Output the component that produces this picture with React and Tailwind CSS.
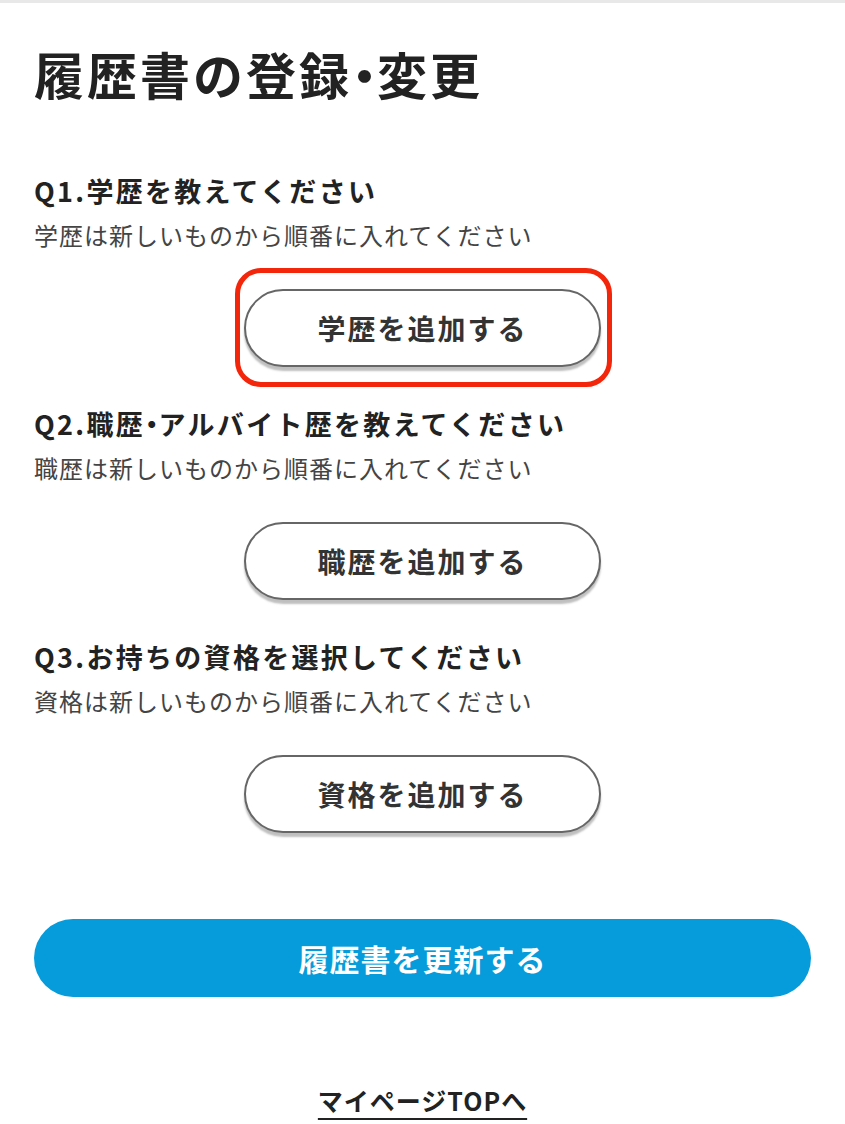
import React from "react";

const font = { fontFamily: '"Noto Sans CJK JP", "Noto Sans", sans-serif' };

// proportional (narrow) middle dot like the reference
const Dot = () => <span className="[font-feature-settings:'palt'] tracking-normal">・</span>;

function Section({ title, note, label, marked }) {
  return (
    <div className="flex flex-col">
      <h2 className="text-[27px] font-bold leading-[36px] text-[#222] tracking-[2.3px]">{title}</h2>
      <p className="mt-[10px] text-[24px] leading-[32px] text-[#444] tracking-[1px]">{note}</p>
      <div className="mt-[38px] flex justify-center">
        <div className="relative">
          <button className="w-[357px] h-[78px] rounded-full border-2 border-[#666] bg-white text-[28px] font-bold text-[#333] tracking-[2px] shadow-[0_4px_2px_rgba(0,0,0,0.25)]">
            {label}
          </button>
          {marked && (
            <div className="absolute -left-[9px] -right-[11px] -top-[21px] -bottom-[20px] rounded-[26px] border-[5px] border-[#f3260b] pointer-events-none" />
          )}
        </div>
      </div>
    </div>
  );
}

export default function App() {
  return (
    <div className="min-h-screen bg-white" style={font}>
      <div className="h-[3px] bg-[#e8e8e8]" />
      <div className="px-[34px]">
        <h1 className="mt-[38px] text-[50px] font-bold leading-[64px] text-[#222] tracking-[3px]">
          履歴書の登録<Dot />変更
        </h1>

        <div className="mt-[68px] flex flex-col gap-[39px]">
          <Section
            title={<>Q1.学歴を教えてください</>}
            note="学歴は新しいものから順番に入れてください"
            label="学歴を追加する"
            marked
          />
          <Section
            title={<>Q2.職歴<Dot />アルバイト歴を教えてください</>}
            note="職歴は新しいものから順番に入れてください"
            label="職歴を追加する"
          />
          <Section
            title={<>Q3.お持ちの資格を選択してください</>}
            note="資格は新しいものから順番に入れてください"
            label="資格を追加する"
          />
        </div>

        <button className="mt-[86px] w-full h-[78px] rounded-full bg-[#069cdb] text-white text-[30px] font-bold tracking-[1px]">
          履歴書を更新する
        </button>

        <div className="mt-[85px] flex justify-center">
          <a href="#" className="text-[25px] font-bold text-[#222] tracking-[1px] underline underline-offset-[7px] decoration-2">
            マイページTOPへ
          </a>
        </div>
      </div>
    </div>
  );
}
